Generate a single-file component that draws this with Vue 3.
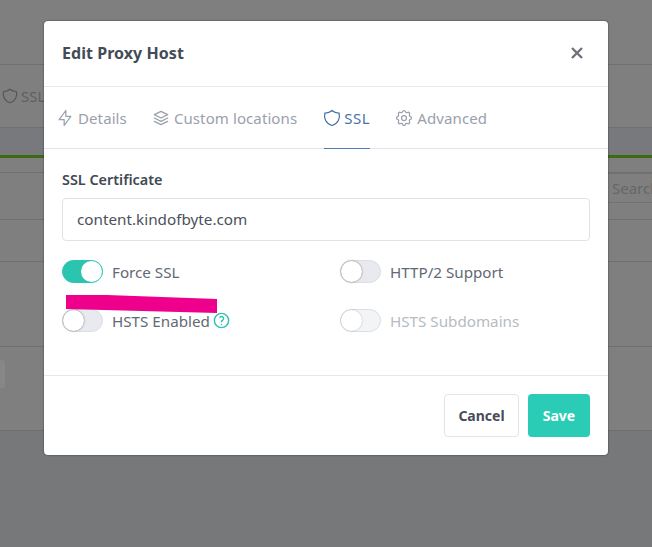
<script setup>
const tabs = [
  { label: 'Details', icon: 'bolt' },
  { label: 'Custom locations', icon: 'stack' },
  { label: 'SSL', icon: 'shield', active: true },
  { label: 'Advanced', icon: 'gear' }
]
const toggles = [
  { label: 'Force SSL', on: true },
  { label: 'HTTP/2 Support' },
  { label: 'HSTS Enabled', help: true },
  { label: 'HSTS Subdomains', disabled: true }
]
</script>

<template>
  <div class="page">
    <div class="bg bg-top"></div>
    <div class="bg bg-tabs">
      <svg class="ico bg-shield" viewBox="0 0 24 24"><path d="M12 3a12 12 0 0 0 8.5 3a12 12 0 0 1-8.5 15a12 12 0 0 1-8.5-15a12 12 0 0 0 8.5-3" /></svg>
      <span>SSL</span>
    </div>
    <div class="bg bg-band"></div>
    <div class="bg bg-green"></div>
    <div class="bg bg-search"><span class="search">Search</span></div>
    <div class="bg bg-r1"></div>
    <div class="bg bg-r2"></div>
    <div class="bg bg-r3"><span class="chip"></span></div>
    <div class="bg bg-r4"></div>

    <div class="modal">
      <header class="head">
        <h1>Edit Proxy Host</h1>
        <svg class="close" viewBox="0 0 14 14"><path d="M2 2l10 10M12 2L2 12" /></svg>
      </header>
      <nav class="tabs">
        <a v-for="t in tabs" :key="t.label" class="tab" :class="{ active: t.active }">
          <svg class="ico" viewBox="0 0 24 24">
            <path v-if="t.icon === 'bolt'" d="M13 3v7h6l-8 11v-7h-6l8-11" />
            <path v-else-if="t.icon === 'stack'" d="M12 4l-8 4l8 4l8-4l-8-4M4 12l8 4l8-4M4 16l8 4l8-4" />
            <path v-else-if="t.icon === 'shield'" d="M12 3a12 12 0 0 0 8.5 3a12 12 0 0 1-8.5 15a12 12 0 0 1-8.5-15a12 12 0 0 0 8.5-3" />
            <template v-else>
              <path d="M10.325 4.317c.426-1.756 2.924-1.756 3.35 0a1.724 1.724 0 0 0 2.573 1.066c1.543-.94 3.31.826 2.37 2.37a1.724 1.724 0 0 0 1.065 2.572c1.756.426 1.756 2.924 0 3.35a1.724 1.724 0 0 0-1.066 2.573c.94 1.543-.826 3.31-2.37 2.37a1.724 1.724 0 0 0-2.572 1.065c-.426 1.756-2.924 1.756-3.35 0a1.724 1.724 0 0 0-2.573-1.066c-1.543.94-3.31-.826-2.37-2.37a1.724 1.724 0 0 0-1.065-2.572c-1.756-.426-1.756-2.924 0-3.35a1.724 1.724 0 0 0 1.066-2.573c-.94-1.543.826-3.31 2.37-2.37c1 .608 2.296.07 2.572-1.065z" />
              <circle cx="12" cy="12" r="3" />
            </template>
          </svg>
          <span>{{ t.label }}</span>
        </a>
      </nav>
      <section class="body">
        <label class="field-label">SSL Certificate</label>
        <div class="input">content.kindofbyte.com</div>
        <div class="grid">
          <div v-for="t in toggles" :key="t.label" class="row" :class="{ disabled: t.disabled }">
            <span class="switch" :class="{ on: t.on }"><i></i></span>
            <span class="row-label">{{ t.label }}</span>
            <svg v-if="t.help" class="help" viewBox="0 0 24 24">
              <circle cx="12" cy="12" r="9" />
              <path d="M12 17v.01M12 13.5a1.5 1.5 0 0 1 1-1.5a2.6 2.6 0 1 0-3-4" />
            </svg>
          </div>
        </div>
      </section>
      <footer class="foot">
        <button class="btn cancel">Cancel</button>
        <button class="btn save">Save</button>
      </footer>
      <svg class="scribble" viewBox="0 0 152 19" width="152" height="19"><path d="M0 0L41 0L151 4L151 18L0 14Z" /></svg>
    </div>
  </div>
</template>

<style>
html, body { margin: 0; background: #7f7f7f; }
</style>

<style scoped>
.page {
  position: relative;
  width: 652px;
  height: 547px;
  overflow: hidden;
  background: #7f7f7f;
  font-family: "Noto Sans", sans-serif;
}
.bg { box-sizing: border-box; border-bottom: 1px solid #6f6f6f; }
.bg-top { height: 65px; }
.bg-tabs {
  height: 63px;
  display: flex;
  align-items: center;
  gap: 2px;
  padding-left: 1px;
  color: #5f5f5f;
  font-size: 15px;
}
.bg-shield { color: #555; }
.bg-band { height: 27px; background: #78797c; border-bottom: 0; }
.bg-green { height: 3px; background: #3f6a14; border-bottom: 0; }
.bg-search { height: 48px; margin-top: 14px; border-top: 1px solid #6f6f6f; position: relative; }
.search {
  position: absolute;
  left: 606px;
  top: 0;
  width: 60px;
  height: 30px;
  box-sizing: border-box;
  padding-left: 5px;
  line-height: 28px;
  border: 1px solid #727272;
  border-radius: 3px;
  color: #666;
  font-size: 15px;
}
.bg-r1 { height: 42px; }
.bg-r2 { height: 85px; }
.bg-r3 { height: 84px; position: relative; }
.chip {
  position: absolute;
  left: 0;
  top: 13px;
  width: 5px;
  height: 28px;
  background: #878787;
  border-radius: 0 3px 3px 0;
}
.bg-r4 { height: 117px; background: #77787a; border-bottom: 0; }

.modal {
  position: absolute;
  left: 44px;
  top: 21px;
  width: 564px;
  height: 434px;
  box-sizing: border-box;
  background: #fff;
  border-radius: 4px;
  display: flex;
  flex-direction: column;
  box-shadow: 0 0 2px rgba(0, 0, 0, .6);
}
.head {
  height: 66px;
  box-sizing: border-box;
  border-bottom: 1px solid #e6e8ec;
  display: flex;
  align-items: center;
  justify-content: space-between;
  padding: 0 24px 2px 18px;
}
h1 {
  margin: 0;
  font-size: 16px;
  font-weight: 700;
  letter-spacing: .05px;
  color: #434b57;
}
.close {
  width: 14px;
  height: 14px;
  fill: none;
  stroke: #6e7379;
  stroke-width: 2.4;
}
.tabs {
  height: 62px;
  box-sizing: border-box;
  border-bottom: 1px solid #e1e4e9;
  display: flex;
  padding-left: 13px;
  gap: 26px;
}
.tab {
  display: flex;
  align-items: center;
  gap: 3px;
  color: #9aa0ac;
  font-size: 15px;
  letter-spacing: .1px;
  margin-bottom: -1px;
  border-bottom: 1px solid transparent;
}
.tab .ico { width: 20px; height: 20px; margin-left: -2px; stroke-width: 1.5; }
.tab.active { color: #4a73ad; border-bottom-color: #4f7bb8; letter-spacing: .6px; gap: 2px; margin-left: 1px; }
.ico {
  width: 18px;
  height: 18px;
  fill: none;
  stroke: currentColor;
  stroke-width: 1.6;
  stroke-linecap: round;
  stroke-linejoin: round;
  flex: none;
}
.body { flex: 1; padding: 21px 18px 0; box-sizing: border-box; }
.field-label {
  display: block;
  font-size: 14.4px;
  font-weight: 600;
  line-height: 20px;
  color: #414954;
}
.input {
  margin-top: 8px;
  height: 43px;
  box-sizing: border-box;
  border: 1px solid #dfe2e7;
  border-radius: 4px;
  padding: 0 14px;
  line-height: 41px;
  font-size: 15.25px;
  color: #4a515c;
}
.grid {
  margin-top: 19px;
  display: grid;
  grid-template-columns: 278px 1fr;
  row-gap: 26px;
}
.row { display: flex; align-items: center; height: 23px; color: #626974; font-size: 15.2px; }
.row.disabled { color: #b6bbc3; }
.switch {
  width: 41px;
  height: 23px;
  box-sizing: border-box;
  border-radius: 12px;
  background: #e9eaf0;
  border: 1px solid #dcdee4;
  position: relative;
  margin-right: 9px;
  flex: none;
}
.switch i {
  position: absolute;
  left: 0;
  top: 0;
  width: 21px;
  height: 21px;
  border-radius: 50%;
  background: #fff;
  box-shadow: 0 0 2px rgba(0, 0, 0, .55);
}
.disabled .switch { background: #f3f4f6; }
.disabled .switch i { box-shadow: 0 0 2px rgba(0, 0, 0, .25); }
.switch.on { background: #2bc4ae; border-color: #2bc4ae; }
.switch.on i { left: 18px; box-shadow: none; }
.help {
  width: 19px;
  height: 19px;
  margin-left: 2px;
  fill: none;
  stroke: #2bc4ae;
  stroke-width: 1.8;
  stroke-linecap: round;
  stroke-linejoin: round;
}
.foot {
  height: 80px;
  box-sizing: border-box;
  border-top: 1px solid #e6e8ec;
  display: flex;
  justify-content: flex-end;
  align-items: flex-start;
  gap: 9px;
  padding: 18px 18px 0;
}
.btn {
  height: 43px;
  border-radius: 4px;
  font: 700 14px "Noto Sans", sans-serif;
  padding: 0;
}
.cancel { width: 75px; background: #fff; border: 1px solid #e1e4e9; color: #464d59; }
.save { width: 62px; background: #2bccb5; border: 0; color: #fff; }
.scribble { position: absolute; left: 22px; top: 274px; }
.scribble path { fill: #ee008c; }
</style>
